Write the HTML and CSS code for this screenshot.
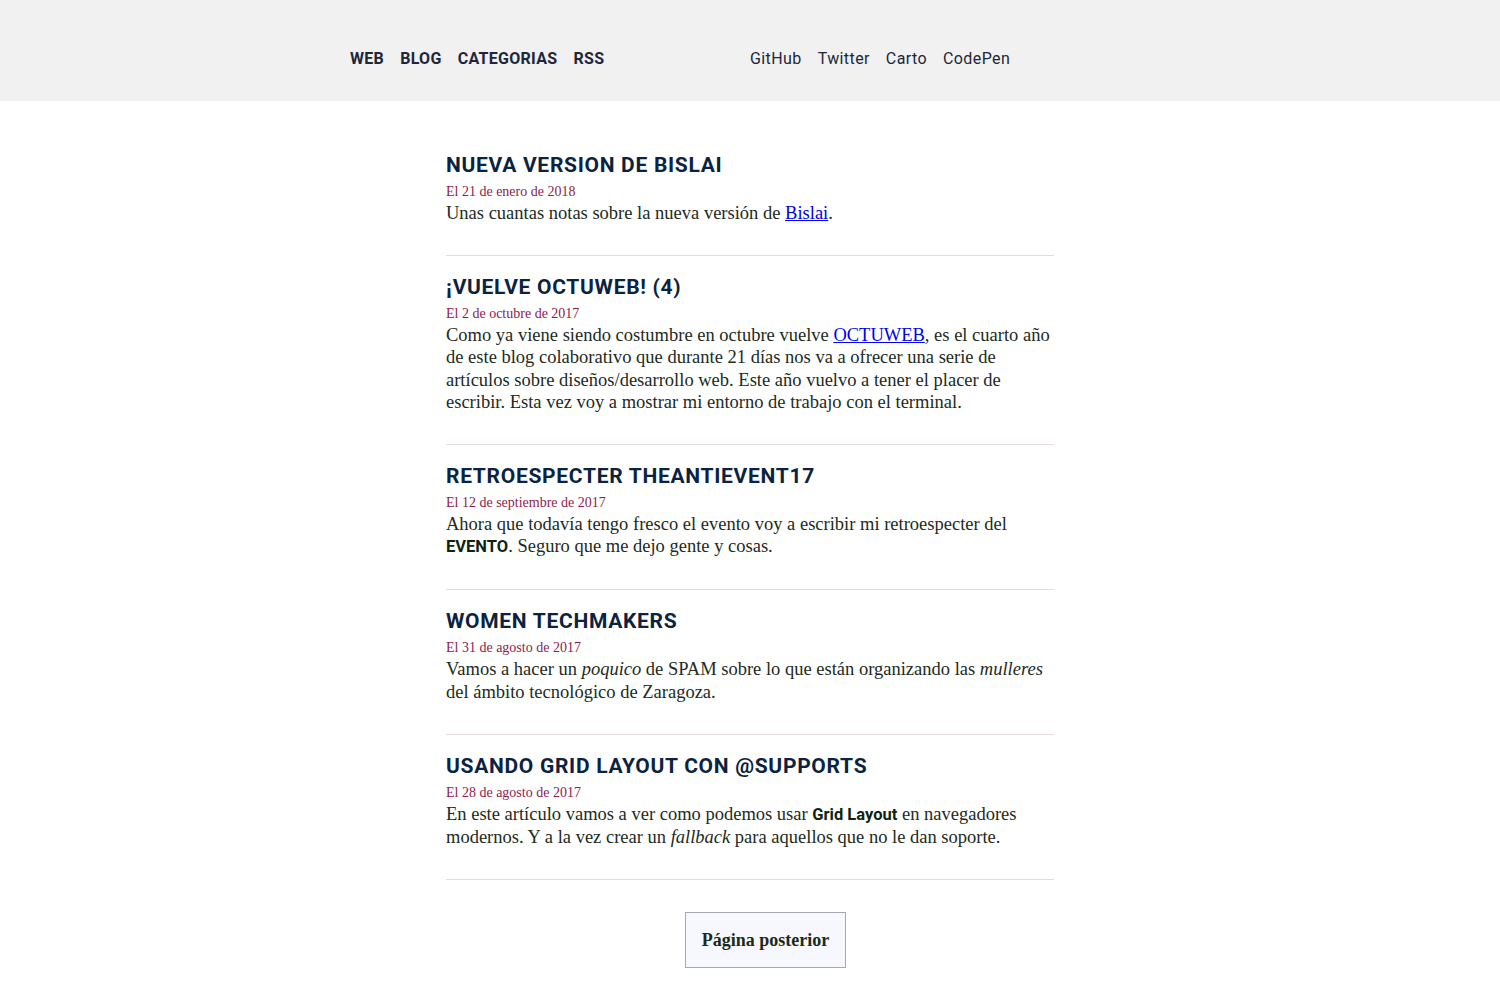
FILE: index.html
```html
<!DOCTYPE html>
<html lang="es">
<head>
<meta charset="utf-8">
<title>Blog</title>
<link rel="stylesheet" href="styles.css">
</head>
<body>
<header class="site-header">
  <div class="header-inner">
    <nav class="nav-main">
      <a href="#">WEB</a>
      <a href="#">BLOG</a>
      <a href="#">CATEGORIAS</a>
      <a href="#">RSS</a>
    </nav>
    <nav class="nav-social">
      <a href="#">GitHub</a>
      <a href="#">Twitter</a>
      <a href="#">Carto</a>
      <a href="#">CodePen</a>
    </nav>
  </div>
</header>
<main class="posts">
  <article class="post">
    <h2 class="post-title">NUEVA VERSION DE BISLAI</h2>
    <p class="post-date">El 21 de enero de 2018</p>
    <p class="post-excerpt">Unas cuantas notas sobre la nueva versión de <a href="#">Bislai</a>.</p>
  </article>
  <article class="post">
    <h2 class="post-title">¡VUELVE OCTUWEB! (4)</h2>
    <p class="post-date">El 2 de octubre de 2017</p>
    <p class="post-excerpt">Como ya viene siendo costumbre en octubre vuelve <a href="#">OCTUWEB</a>, es el cuarto año de este blog colaborativo que durante 21 días nos va a ofrecer una serie de artículos sobre diseños/desarrollo web. Este año vuelvo a tener el placer de escribir. Esta vez voy a mostrar mi entorno de trabajo con el terminal.</p>
  </article>
  <article class="post">
    <h2 class="post-title">RETROESPECTER THEANTIEVENT17</h2>
    <p class="post-date">El 12 de septiembre de 2017</p>
    <p class="post-excerpt">Ahora que todavía tengo fresco el evento voy a escribir mi retroespecter del <strong>EVENTO</strong>. Seguro que me dejo gente y cosas.</p>
  </article>
  <article class="post">
    <h2 class="post-title">WOMEN TECHMAKERS</h2>
    <p class="post-date">El 31 de agosto de 2017</p>
    <p class="post-excerpt">Vamos a hacer un <em>poquico</em> de SPAM sobre lo que están organizando las <em>mulleres</em> del ámbito tecnológico de Zaragoza.</p>
  </article>
  <article class="post">
    <h2 class="post-title">USANDO GRID LAYOUT CON @SUPPORTS</h2>
    <p class="post-date">El 28 de agosto de 2017</p>
    <p class="post-excerpt">En este artículo vamos a ver como podemos usar <strong>Grid Layout</strong> en navegadores modernos. Y a la vez crear un <em>fallback</em> para aquellos que no le dan soporte.</p>
  </article>
  <div class="pager">
    <a class="pager-btn" href="#">Página posterior</a>
  </div>
</main>
</body>
</html>
```

FILE: styles.css
```css
html, body {
  margin: 0;
  padding: 0;
  background: #ffffff;
}
body {
  font-family: "Liberation Serif", "DejaVu Serif", serif;
  color: #222a22;
}
.site-header {
  background: #f1f1f2;
  height: 101px;
}
.header-inner {
  width: 800px;
  margin: 0 auto;
  display: flex;
  height: 100%;
  align-items: center;
  padding-top: 16px;
  box-sizing: border-box;
}
.nav-main, .nav-social {
  width: 400px;
  display: flex;
  gap: 16px;
}
.nav-main a, .nav-social a {
  text-decoration: none;
  color: #1e2638;
  font-family: "Roboto", "Inter", sans-serif;
  font-size: 16px;
}
.nav-main a {
  font-weight: 700;
  letter-spacing: 0.3px;
}
.nav-social a {
  font-weight: 400;
  letter-spacing: 0.4px;
}
.posts {
  width: 608px;
  margin: 0 auto;
  padding-top: 51px;
}
.post {
  border-bottom: 1px solid #e9d8de;
  padding-bottom: 31px;
  margin-bottom: 18px;
}
.post-title {
  margin: 0;
  font-family: "Roboto", "Inter", sans-serif;
  font-weight: 700;
  font-size: 21px;
  letter-spacing: 0.7px;
  color: #0b2340;
  line-height: 26px;
}
.post-date {
  margin: 4px 0 0;
  font-size: 14px;
  color: #8e1c4c;
  line-height: 20px;
}
.post-excerpt {
  margin: 0;
  font-size: 18.5px;
  line-height: 22.2px;
}
.post-excerpt a {
  color: #0000ee;
}
.post-excerpt strong {
  font-family: "Roboto", "Inter", sans-serif;
  font-weight: 700;
  font-size: 16.5px;
  color: #0f2410;
}
.pager {
  display: flex;
  justify-content: center;
  padding: 14px 0 30px 31px;
}
.pager-btn {
  display: block;
  width: 161px;
  height: 56px;
  box-sizing: border-box;
  border: 1px solid #a8a8ac;
  background: #f7f8fd;
  color: #1a2a1a;
  text-decoration: none;
  font-size: 18px;
  font-weight: 700;
  line-height: 54px;
  text-align: center;
}
```
